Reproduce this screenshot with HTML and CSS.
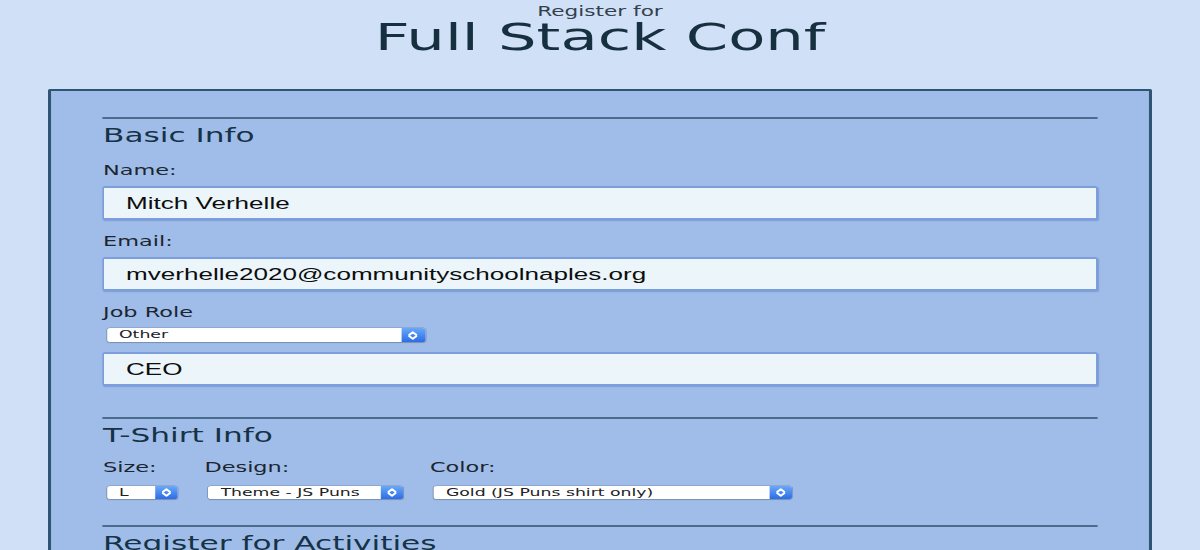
FILE: index.html
```html
<!DOCTYPE html>
<html lang="en">
<head>
<meta charset="utf-8">
<title>Full Stack Conf</title>
<link rel="stylesheet" href="styles.css">
</head>
<body>
<div class="page">
<header class="page-header">
  <p class="pre-title">Register for</p>
  <h1 class="title">Full Stack Conf</h1>
</header>
<form class="card">
  <section class="section section--basic">
    <h2 class="legend">Basic Info</h2>
    <label class="label" for="name">Name:</label>
    <input class="text-input" id="name" type="text" value="Mitch Verhelle">
    <label class="label" for="mail">Email:</label>
    <input class="text-input" id="mail" type="text" value="mverhelle2020@communityschoolnaples.org">
    <label class="label" for="title">Job Role</label>
    <div class="select select--role">
      <select id="title"><option>Other</option></select>
      <span class="select-btn"><svg class="chev" viewBox="0 0 9 8" preserveAspectRatio="none"><path d="M1.4 3.4 L4.5 1 L7.6 3.4 M1.4 4.6 L4.5 7 L7.6 4.6" fill="none" stroke="#fff" stroke-width="1.6" stroke-linecap="round" stroke-linejoin="round" vector-effect="non-scaling-stroke"/></svg></span>
    </div>
    <input class="text-input text-input--other" type="text" value="CEO">
  </section>
  <section class="section section--shirt">
    <h2 class="legend">T-Shirt Info</h2>
    <div class="shirt-row">
      <div class="shirt-col">
        <label class="label" for="size">Size:</label>
        <div class="select select--size">
          <select id="size"><option>L</option></select>
          <span class="select-btn"><svg class="chev" viewBox="0 0 9 8" preserveAspectRatio="none"><path d="M1.4 3.4 L4.5 1 L7.6 3.4 M1.4 4.6 L4.5 7 L7.6 4.6" fill="none" stroke="#fff" stroke-width="1.6" stroke-linecap="round" stroke-linejoin="round" vector-effect="non-scaling-stroke"/></svg></span>
        </div>
      </div>
      <div class="shirt-col">
        <label class="label" for="design">Design:</label>
        <div class="select select--design">
          <select id="design"><option>Theme - JS Puns</option></select>
          <span class="select-btn"><svg class="chev" viewBox="0 0 9 8" preserveAspectRatio="none"><path d="M1.4 3.4 L4.5 1 L7.6 3.4 M1.4 4.6 L4.5 7 L7.6 4.6" fill="none" stroke="#fff" stroke-width="1.6" stroke-linecap="round" stroke-linejoin="round" vector-effect="non-scaling-stroke"/></svg></span>
        </div>
      </div>
      <div class="shirt-col">
        <label class="label" for="color">Color:</label>
        <div class="select select--color">
          <select id="color"><option>Gold (JS Puns shirt only)</option></select>
          <span class="select-btn"><svg class="chev" viewBox="0 0 9 8" preserveAspectRatio="none"><path d="M1.4 3.4 L4.5 1 L7.6 3.4 M1.4 4.6 L4.5 7 L7.6 4.6" fill="none" stroke="#fff" stroke-width="1.6" stroke-linecap="round" stroke-linejoin="round" vector-effect="non-scaling-stroke"/></svg></span>
        </div>
      </div>
    </div>
  </section>
  <section class="section section--activities">
    <h2 class="legend">Register for Activities</h2>
  </section>
</form>
</div>
</body>
</html>
```
FILE: styles.css
```css
* { box-sizing: border-box; }

html, body { overflow: hidden; }

body {
  margin: 0;
  background: #d0e0f7;
  font-family: "DejaVu Sans", "Liberation Sans", sans-serif;
  color: #1d2a33;
}

/* The page is drawn at 750px and stretched horizontally to fill 1200px,
   as in the reference capture. */
.page {
  width: 750px;
  transform: scaleX(1.6);
  transform-origin: 0 0;
}

.page-header {
  text-align: center;
  padding: 4px 0 36px;
}

.pre-title {
  margin: 0;
  font-size: 13.5px;
  line-height: 14px;
  color: #33414c;
}

.title {
  margin: 3px 0 0;
  font-size: 38px;
  line-height: 32px;
  font-weight: normal;
  color: #17303f;
}

.card {
  margin: 0 30px;
  background: #a0bde9;
  border: 2px solid #2f5575;
  border-bottom: none;
  border-radius: 2px 2px 0 0;
  padding: 26px 32.4px 60px;
}

.section {
  border-top: 2px solid #4b6b8c;
  padding-top: 5px;
}

.section--basic { padding-bottom: 31px; }
.section--shirt { padding-bottom: 26px; }

.legend {
  margin: 0 0 13px;
  font-size: 19.5px;
  line-height: 24px;
  font-weight: normal;
  color: #163246;
}

.section--shirt .legend { margin-bottom: 10px; }

.label {
  display: block;
  font-size: 14px;
  line-height: 18px;
  margin-bottom: 7px;
  color: #1b2630;
}

.text-input {
  display: block;
  width: 100%;
  height: 34px;
  margin: 0 0 12px;
  border-style: solid;
  border-color: #7c9edc;
  border-width: 2px 1.6px;
  border-radius: 2px;
  background: #ebf5fa;
  padding: 0 13.4px;
  font-family: "Liberation Sans", Arial, sans-serif;
  font-size: 16.3px;
  color: #0d0d0d;
  box-shadow: 0.7px 1px 1px rgba(60, 95, 170, 0.35);
  outline: none;
}

.text-input--other { margin: 10px 0 0; }

.select {
  display: flex;
  margin-left: 2.5px;
  height: 14px;
  border-radius: 2px;
  background: #fff;
  box-shadow: 0 0 0 0.5px rgba(0, 0, 0, 0.22), 0 1px 1px rgba(0, 0, 0, 0.15);
}

.select select {
  flex: 1;
  min-width: 0;
  -webkit-appearance: none;
  appearance: none;
  border: 0;
  margin: 0;
  background: transparent;
  height: 14px;
  line-height: 14px;
  padding: 0 0 0 7.5px;
  font-family: "DejaVu Sans", "Liberation Sans", sans-serif;
  font-size: 10.8px;
  color: #222;
  outline: none;
}

.select-btn {
  width: 14.4px;
  flex: none;
  display: flex;
  align-items: center;
  justify-content: center;
  border-radius: 0 2px 2px 0;
  background: linear-gradient(#6aa8f8, #2c6de6);
}

.chev {
  width: 6px;
  height: 9px;
  display: block;
}

.select--role { width: 198.75px; }
.select--size { width: 44.4px; height: 13px; }
.select--design { width: 121.9px; height: 13px; }
.select--color { width: 223.75px; height: 13px; }
.section--shirt .select select { height: 13px; line-height: 13px; }
.section--shirt .label { margin-bottom: 10px; }

.shirt-row {
  display: flex;
  gap: 16.5px;
  align-items: flex-start;
}
```
